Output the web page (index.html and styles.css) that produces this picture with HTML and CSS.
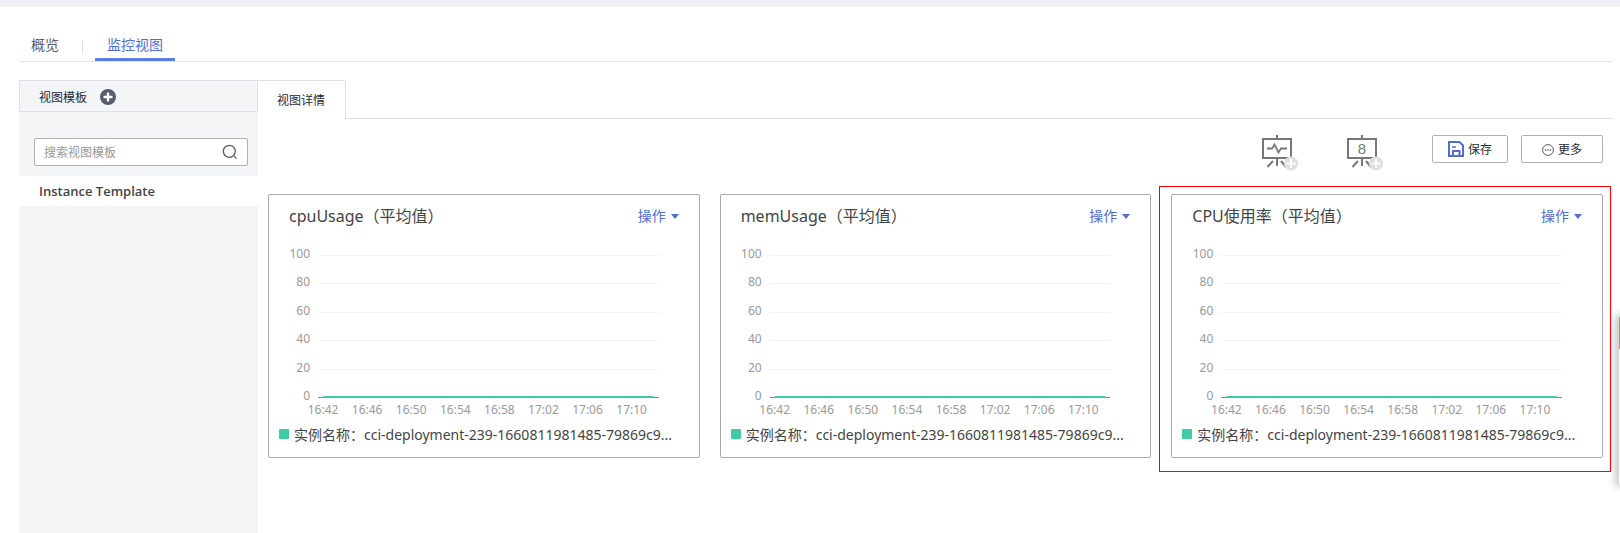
FILE: index.html
```html
<!DOCTYPE html>
<html lang="zh-CN">
<head>
<meta charset="utf-8">
<title>监控视图</title>
<link rel="stylesheet" href="styles.css">
</head>
<body>
<div class="topbar"></div>
<main class="page">
  <nav class="tabs">
    <a class="tab" href="#">概览</a>
    <span class="tab-divider"></span>
    <a class="tab tab-active" href="#">监控视图</a>
  </nav>
  <div class="workspace">
    <aside class="sidebar">
      <div class="sidebar-head">
        <span>视图模板</span>
        <button class="icon-button" aria-label="添加模板">
          <svg width="16" height="16" viewBox="0 0 16 16"><circle cx="8" cy="8" r="8" fill="#575d6c"/><path d="M8 3.5v9M3.5 8h9" stroke="#fff" stroke-width="2.4"/></svg>
        </button>
      </div>
      <div class="search">
        <input class="search-input" type="text" placeholder="搜索视图模板" aria-label="搜索视图模板">
        <button class="icon-button" aria-label="搜索">
          <svg width="16" height="16" viewBox="0 0 16 16" fill="none" stroke="#575d6c" stroke-width="1.3"><circle cx="7.3" cy="7.3" r="6"/><path d="M11.6 11.6l3 3"/></svg>
        </button>
      </div>
      <a class="template" href="#">Instance Template</a>
    </aside>
    <section class="detail">
      <div class="detail-tabs">
        <a class="detail-tab" href="#">视图详情</a>
        <div class="detail-line"></div>
      </div>
      <div class="toolbar">
        <button class="icon-button" aria-label="添加折线图">
          <svg width="36" height="36" viewBox="0 0 36 36" fill="none" stroke="#777" stroke-width="2"><path d="M15 0v4M1 4h28v19H1zM15 23v8M11 26l-5.500 6M19 26l5 6"/><path d="M5 13.500h5l2.500-4 4 8 2.500-4h6" stroke-width="1.800"/><circle cx="29" cy="28.500" r="7" fill="#dfdfdf" stroke="none"/><path d="M29 24v9M24.500 28.500h9" stroke="#fff"/></svg>
        </button>
        <button class="icon-button" aria-label="添加数字图">
          <svg width="36" height="36" viewBox="0 0 36 36" fill="none" stroke="#777" stroke-width="2"><path d="M15 0v4M1 4h28v19H1zM15 23v8M11 26l-5.500 6M19 26l5 6"/><text class="board-digit" x="15" y="19" text-anchor="middle">8</text><circle cx="29" cy="28.500" r="7" fill="#dfdfdf" stroke="none"/><path d="M29 24v9M24.500 28.500h9" stroke="#fff"/></svg>
        </button>
        <div class="actions">
          <button class="button">
            <svg width="16" height="16" viewBox="0 0 16 16" fill="none" stroke="#526ecc" stroke-width="2"><path d="M1 1h10.500L15 4.500V15H1zM5 15V10h6.500v5"/><path d="M4 6h4" stroke-width="1.500"/></svg>
            保存
          </button>
          <button class="button button-wide">
            <svg width="12" height="14" viewBox="0 -2 12 14" fill="none" stroke="#575d6c"><circle cx="6" cy="6" r="5.400"/><path d="M3 6h1.300M5.350 6h1.300M7.700 6H9" stroke-width="1.300"/></svg>
            更多
          </button>
        </div>
      </div>
      <div class="cards">
        <article class="card">
          <header class="card-head">
            <h2 class="card-title">cpuUsage（平均值）</h2>
            <button class="menu">操作<span class="caret"></span></button>
          </header>
          <div class="chart">
            <div class="y-axis"><span>100</span><span>80</span><span>60</span><span>40</span><span>20</span><span>0</span></div>
            <div class="plot"><i></i><i></i><i></i><i></i><i></i><div class="series"></div></div>
            <div class="x-axis"><span>16:42</span><span>16:46</span><span>16:50</span><span>16:54</span><span>16:58</span><span>17:02</span><span>17:06</span><span>17:10</span></div>
          </div>
          <div class="legend"><span class="swatch"></span><span>实例名称：cci-deployment-239-1660811981485-79869c9...</span></div>
        </article>
        <article class="card">
          <header class="card-head">
            <h2 class="card-title">memUsage（平均值）</h2>
            <button class="menu">操作<span class="caret"></span></button>
          </header>
          <div class="chart">
            <div class="y-axis"><span>100</span><span>80</span><span>60</span><span>40</span><span>20</span><span>0</span></div>
            <div class="plot"><i></i><i></i><i></i><i></i><i></i><div class="series"></div></div>
            <div class="x-axis"><span>16:42</span><span>16:46</span><span>16:50</span><span>16:54</span><span>16:58</span><span>17:02</span><span>17:06</span><span>17:10</span></div>
          </div>
          <div class="legend"><span class="swatch"></span><span>实例名称：cci-deployment-239-1660811981485-79869c9...</span></div>
        </article>
        <article class="card card-marked">
          <header class="card-head">
            <h2 class="card-title">CPU使用率（平均值）</h2>
            <button class="menu">操作<span class="caret"></span></button>
          </header>
          <div class="chart">
            <div class="y-axis"><span>100</span><span>80</span><span>60</span><span>40</span><span>20</span><span>0</span></div>
            <div class="plot"><i></i><i></i><i></i><i></i><i></i><div class="series"></div></div>
            <div class="x-axis"><span>16:42</span><span>16:46</span><span>16:50</span><span>16:54</span><span>16:58</span><span>17:02</span><span>17:06</span><span>17:10</span></div>
          </div>
          <div class="legend"><span class="swatch"></span><span>实例名称：cci-deployment-239-1660811981485-79869c9...</span></div>
        </article>
      </div>
    </section>
  </div>
</main>
<div class="dock"><div class="dock-mark"></div></div>
</body>
</html>
```
FILE: styles.css
```css
* { box-sizing: border-box; }
body {
  margin: 0;
  min-height: 100vh;
  display: flex;
  flex-direction: column;
  background: #fff;
  color: #444;
  font-family: "Noto Sans", "Noto Sans CJK SC", sans-serif;
  font-size: 14px;
}
a { color: inherit; text-decoration: none; }
button, input { font: inherit; color: inherit; }
svg { display: block; }
.topbar { height: 7px; background: #eff0f5; }
.page {
  flex: 1;
  display: flex;
  flex-direction: column;
  padding: 25px 7px 0 19px;
}
.tabs {
  display: flex;
  align-items: center;
  height: 30px;
  border-bottom: 1px solid #dfe1e6;
  color: #575d6c;
}
.tab { height: 29px; padding: 0 12px; line-height: 26px; }
.tab-divider { width: 1px; height: 14px; margin: 0 12px 0 11px; background: #dfe1e6; }
.tab-active { color: #526ecc; border-bottom: 3px solid #5e7ce0; }
.workspace { flex: 1; display: flex; margin-top: 18px; }
.sidebar { width: 239px; background: #f3f5f7; }
.sidebar-head {
  display: flex;
  align-items: center;
  gap: 13px;
  height: 32px;
  padding: 1px 0 0 19px;
  border: 1px solid #dfe1e6;
  color: #252b3a;
  font-size: 12px;
}
.icon-button { padding: 0; border: 0; background: none; }
.search {
  display: flex;
  align-items: center;
  height: 28px;
  margin: 26px 10px 10px 15px;
  padding: 0 9px;
  border: 1px solid #adb0b8;
  border-radius: 2px;
  background: #fff;
  font-size: 12px;
}
.search-input { flex: 1; min-width: 0; padding: 0; border: 0; outline: 0; background: none; }
.search-input::placeholder { color: #999; }
.template {
  display: block;
  padding-left: 20px;
  line-height: 30px;
  background: #fff;
  font-family: "Open Sans", sans-serif;
  font-size: 13px;
  font-weight: 600;
}
.detail { flex: 1; min-width: 0; }
.detail-tabs { display: flex; height: 39px; }
.detail-tab {
  padding: 0 20px 0 19px;
  border: 1px solid #dfe1e6;
  border-width: 1px 1px 0 0;
  color: #252b3a;
  font-size: 12px;
  line-height: 40px;
}
.detail-line { flex: 1; border-bottom: 1px solid #dfe1e6; }
.toolbar {
  display: flex;
  justify-content: flex-end;
  align-items: flex-start;
  gap: 49px;
  padding: 16px 10px 23px;
}
.board-digit { fill: #777; stroke: none; font: 15px "Liberation Sans", sans-serif; }
.actions { display: flex; gap: 13px; }
.button {
  display: flex;
  align-items: center;
  justify-content: center;
  gap: 4px;
  width: 76px;
  height: 28px;
  padding: 0;
  border: 1px solid #adb0b8;
  border-radius: 2px;
  background: #fff;
  color: #252b3a;
  font-size: 12px;
}
.button-wide { width: 82px; }
.cards {
  display: grid;
  grid-template-columns: repeat(3, 1fr);
  gap: 20px;
  padding: 0 10px;
}
.card {
  position: relative;
  padding-bottom: 12px;
  border: 1px solid #aaa;
  border-radius: 2px;
}
.card-marked::after {
  content: "";
  position: absolute;
  inset: -9px -9px -15px -13px;
  border: 1px solid #f00;
  pointer-events: none;
}
.card-head {
  display: flex;
  justify-content: space-between;
  align-items: center;
  height: 40px;
  padding: 0 20px;
}
.card-title { margin: 0; font-size: 16px; font-weight: 400; }
.menu {
  display: flex;
  align-items: center;
  gap: 5px;
  padding: 0;
  border: 0;
  background: none;
  color: #526ecc;
}
.caret { margin-top: 3px; border: 4px solid transparent; border-top: 5px solid #526ecc; border-bottom: 0; }
.chart {
  display: grid;
  grid-template-columns: 41px 1fr;
  grid-template-rows: 156px 14px;
  column-gap: 8px;
  margin: 12px 40px 0 0;
  color: #999;
  font-size: 12px;
  line-height: 14px;
}
.y-axis {
  display: flex;
  flex-direction: column;
  justify-content: space-between;
  text-align: right;
}
.plot {
  display: grid;
  grid-template-rows: repeat(5, 1fr);
  margin: 8px 0 5px;
  border-bottom: 1px solid #888;
  position: relative;
}
.plot i { border-top: 1px solid #f2f2f2; }
.series { position: absolute; left: 5px; right: 5px; bottom: -1px; height: 2px; background: #3dcca6; }
.x-axis {
  grid-column: 1 / -1;
  display: grid;
  grid-template-columns: repeat(8, 1fr);
  margin: 0 5px 0 32px;
  text-align: center;
}
.legend {
  display: flex;
  gap: 5px;
  margin: 8px 0 0 10px;
  line-height: 20px;
  white-space: nowrap;
}
.swatch { width: 10px; height: 10px; margin-top: 4px; border-radius: 1px; background: #3dcca6; }
.dock {
  position: fixed;
  top: 317px;
  right: 0;
  width: 1px;
  height: 167px;
  background: #fff;
  box-shadow: 0 0 8px 2px rgba(0, 0, 0, 0.4);
}
.dock-mark { height: 32px; background: #e37d78; }
```
